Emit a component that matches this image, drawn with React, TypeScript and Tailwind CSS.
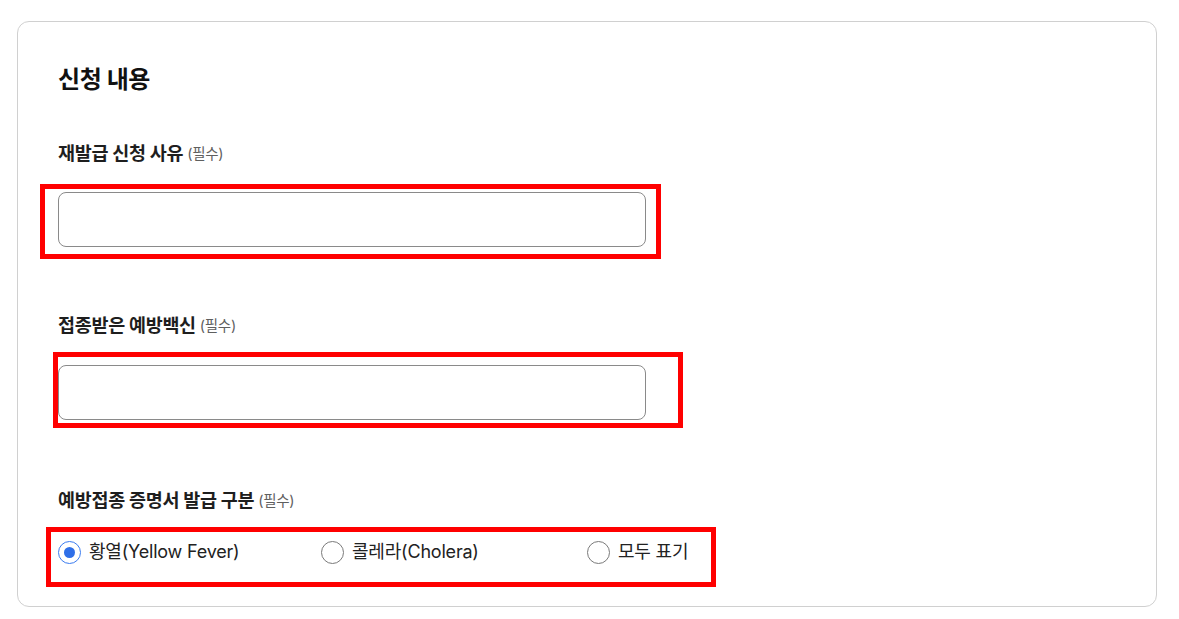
import React, { useState } from 'react';

const font = { fontFamily: 'Inter, "Noto Sans CJK KR", sans-serif' };

function FieldLabel({ text }: { text: string }) {
  return (
    <div className="flex h-[24px] items-center text-[18.5px] font-bold text-[#1e1e1e] tracking-[-0.3px] whitespace-nowrap">
      {text}
      <span className="ml-[4px] text-[14.5px] font-normal text-[#5f5f5f]">(필수)</span>
    </div>
  );
}

// red annotation frame drawn over the field
function Mark({ className }: { className: string }) {
  return <span className={`pointer-events-none absolute border-[5px] border-[#ff0000] ${className}`} />;
}

const options = ['황열(Yellow Fever)', '콜레라(Cholera)', '모두 표기'];

export default function App() {
  const [reason, setReason] = useState('');
  const [vaccine, setVaccine] = useState('');
  const [kind, setKind] = useState(0);

  return (
    <div className="min-h-screen bg-white pt-[21px] pl-[17px]" style={font}>
      <section className="w-[1140px] h-[586px] rounded-[12px] border border-[#d0d0d0] pl-[40px] pt-[42px]">
        <h2 className="h-[32px] text-[24px] leading-[32px] font-bold text-[#111] tracking-[-0.4px]">신청 내용</h2>

        <div className="mt-[46px]">
          <FieldLabel text="재발급 신청 사유" />
          <div className="relative mt-[26px] w-[588px]">
            <input
              value={reason}
              onChange={(e) => setReason(e.target.value)}
              className="block h-[55px] w-full rounded-[8px] border border-[#8a8a8a] px-4 text-[16px] outline-none"
            />
            <Mark className="-left-[18px] -top-[8px] -right-[15px] -bottom-[12px]" />
          </div>
        </div>

        <div className="mt-[67px]">
          <FieldLabel text="접종받은 예방백신" />
          <div className="relative mt-[27px] w-[588px]">
            <input
              value={vaccine}
              onChange={(e) => setVaccine(e.target.value)}
              className="block h-[55px] w-full rounded-[8px] border border-[#8a8a8a] px-4 text-[16px] outline-none"
            />
            <Mark className="-left-[5px] -top-[13px] -right-[37px] -bottom-[8px]" />
          </div>
        </div>

        <div className="mt-[69px]">
          <FieldLabel text="예방접종 증명서 발급 구분" />
          <div className="relative mt-[27px] flex">
            {options.map((label, i) => (
              <label
                key={label}
                onClick={() => setKind(i)}
                className={`flex h-[24px] cursor-pointer items-center gap-[8px] ${i === 0 ? 'w-[263px]' : 'w-[266px]'}`}
              >
                <span
                  className={`flex h-[23px] w-[23px] shrink-0 items-center justify-center rounded-full border ${
                    kind === i ? 'border-[#3b7cf0]' : 'border-[#7a7a7a]'
                  }`}
                >
                  {kind === i && <span className="h-[11px] w-[11px] rounded-full bg-[#2f6fe8]" />}
                </span>
                <span className="text-[18px] leading-[24px] text-[#222] tracking-[-0.2px]">{label}</span>
              </label>
            ))}
            <Mark className="-left-[12px] -top-[13px] w-[670px] -bottom-[23px]" />
          </div>
        </div>
      </section>
    </div>
  );
}
